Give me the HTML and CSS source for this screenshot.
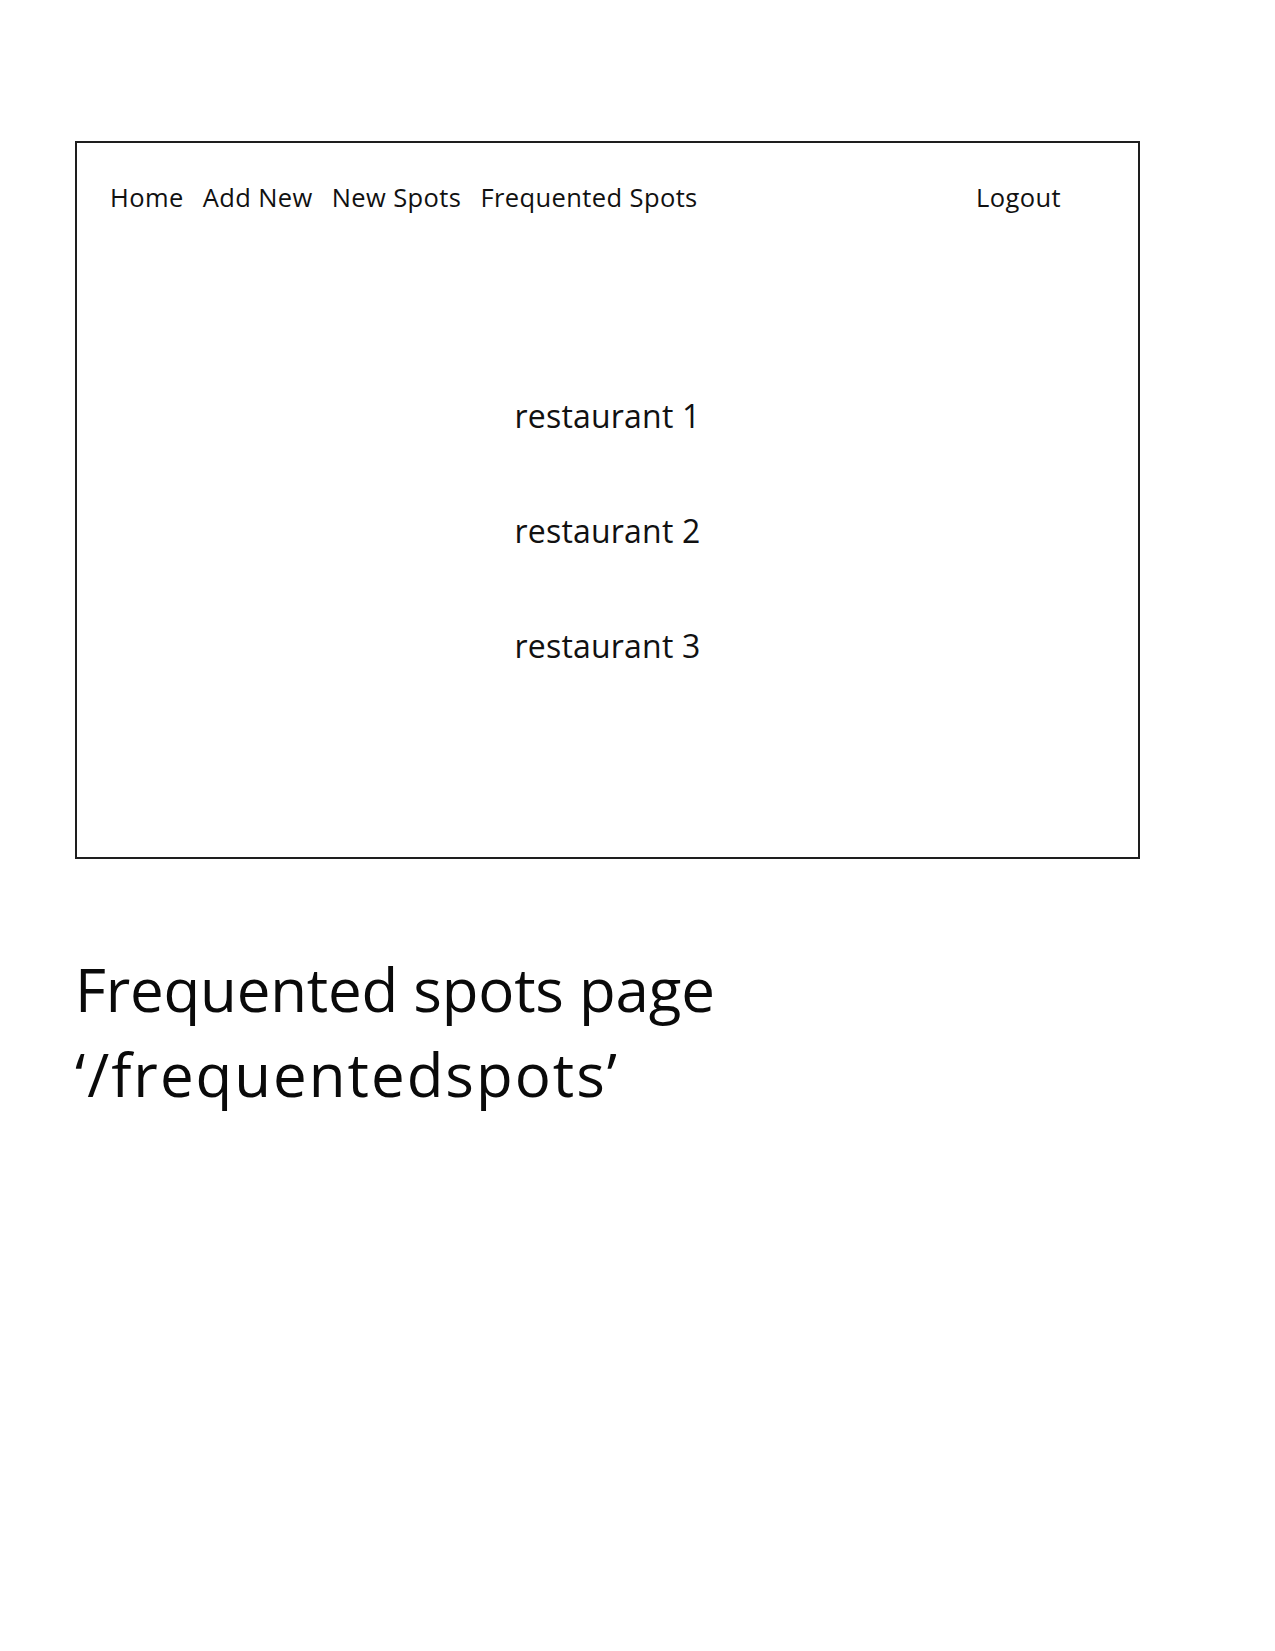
FILE: index.html
```html
<!DOCTYPE html>
<html lang="en">
<head>
<meta charset="utf-8">
<title>Frequented spots page</title>
<link rel="stylesheet" href="styles.css">
</head>
<body>
<div class="page">
  <div class="frame">
    <nav class="nav">
      <ul class="nav-links">
        <li>Home</li>
        <li>Add New</li>
        <li>New Spots</li>
        <li>Frequented Spots</li>
      </ul>
      <div class="nav-logout">Logout</div>
    </nav>
    <ul class="spots">
      <li>restaurant 1</li>
      <li>restaurant 2</li>
      <li>restaurant 3</li>
    </ul>
  </div>
  <h1 class="caption"><span class="caption-title">Frequented spots page</span><span class="caption-path">‘/frequentedspots’</span></h1>
</div>
</body>
</html>
```

FILE: styles.css
```css
html, body {
  margin: 0;
  padding: 0;
  background: #ffffff;
}

body {
  font-family: "Open Sans", "Liberation Sans", sans-serif;
  color: #111111;
}

.page {
  padding: 141px 0 0 75px;
}

.frame {
  box-sizing: border-box;
  width: 1065px;
  border: 2px solid #1e1e1e;
  padding: 37px 77px 189px 33px;
}

.nav {
  display: flex;
  justify-content: space-between;
  align-items: center;
  font-size: 25.5px;
  line-height: 34px;
  letter-spacing: 0.4px;
}

.nav-links {
  display: flex;
  gap: 19px;
  list-style: none;
  margin: 0;
  padding: 0;
}

.spots {
  list-style: none;
  margin: 180px 0 0 0;
  padding: 0 0 0 44px;
  display: flex;
  flex-direction: column;
  gap: 71px;
  text-align: center;
  font-size: 32px;
  line-height: 44px;
  letter-spacing: 0.2px;
}

.caption {
  margin: 88px 0 0 0;
  font-weight: 400;
  font-size: 60px;
  line-height: 85px;
  color: #0a0a0a;
}

.caption-title {
  display: block;
  letter-spacing: -0.2px;
}

.caption-path {
  display: block;
  letter-spacing: 2px;
}
```
